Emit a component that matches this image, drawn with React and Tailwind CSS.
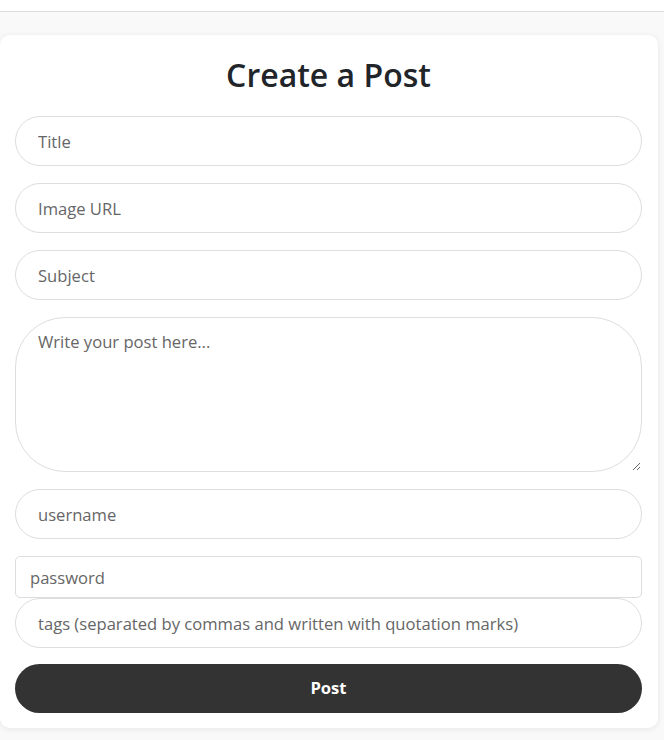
import React from "react";

const font = { fontFamily: '"Open Sans", "Noto Sans", sans-serif' };

export default function App() {
	return (
		<div className="min-h-screen bg-[#f9f9f9]" style={font}>
			<div className="h-[12px] bg-white border-b border-[#dcdcdc]"></div>
			<div className="pt-[23px] pr-[6px]">
				<div className="bg-white rounded-[10px] shadow-[0_1px_6px_rgba(0,0,0,0.08)] pl-[15px] pr-[16px] pt-[12px] pb-[15px]">
					<h1 className="text-center text-[32px] font-semibold text-[#212529] leading-[56px] mb-[13px]">
						Create a Post
					</h1>
					<form className="flex flex-col" onSubmit={(e) => e.preventDefault()}>
						<input
							className="h-[50px] rounded-full border border-[#ddd] px-[22px] text-[16.6px] placeholder:text-[#666] focus:outline-none mb-[17px]"
							placeholder="Title"
						/>
						<input
							className="h-[50px] rounded-full border border-[#ddd] px-[22px] text-[16.6px] placeholder:text-[#666] focus:outline-none mb-[17px]"
							placeholder="Image URL"
						/>
						<input
							className="h-[50px] rounded-full border border-[#ddd] px-[22px] text-[16.6px] placeholder:text-[#666] focus:outline-none mb-[17px]"
							placeholder="Subject"
						/>
						<textarea
							className="h-[155px] rounded-[50px] border border-[#ddd] px-[22px] py-[12px] text-[16.6px] placeholder:text-[#666] focus:outline-none mb-[17px]"
							placeholder="Write your post here..."
						/>
						<input
							className="h-[50px] rounded-full border border-[#ddd] px-[22px] text-[16.6px] placeholder:text-[#666] focus:outline-none mb-[17px]"
							placeholder="username"
						/>
						<input
							type="password"
							className="h-[42px] rounded-[5px] border border-[#ddd] px-[14px] text-[16.6px] placeholder:text-[#666] focus:outline-none"
							placeholder="password"
						/>
						<input
							className="h-[50px] rounded-full border border-[#ddd] px-[22px] text-[16.6px] placeholder:text-[#666] focus:outline-none mb-[16px]"
							placeholder="tags (separated by commas and written with quotation marks)"
						/>
						<button className="h-[49px] rounded-full bg-[#333] text-white font-bold text-[16.6px]">
							Post
						</button>
					</form>
				</div>
			</div>
		</div>
	);
}
